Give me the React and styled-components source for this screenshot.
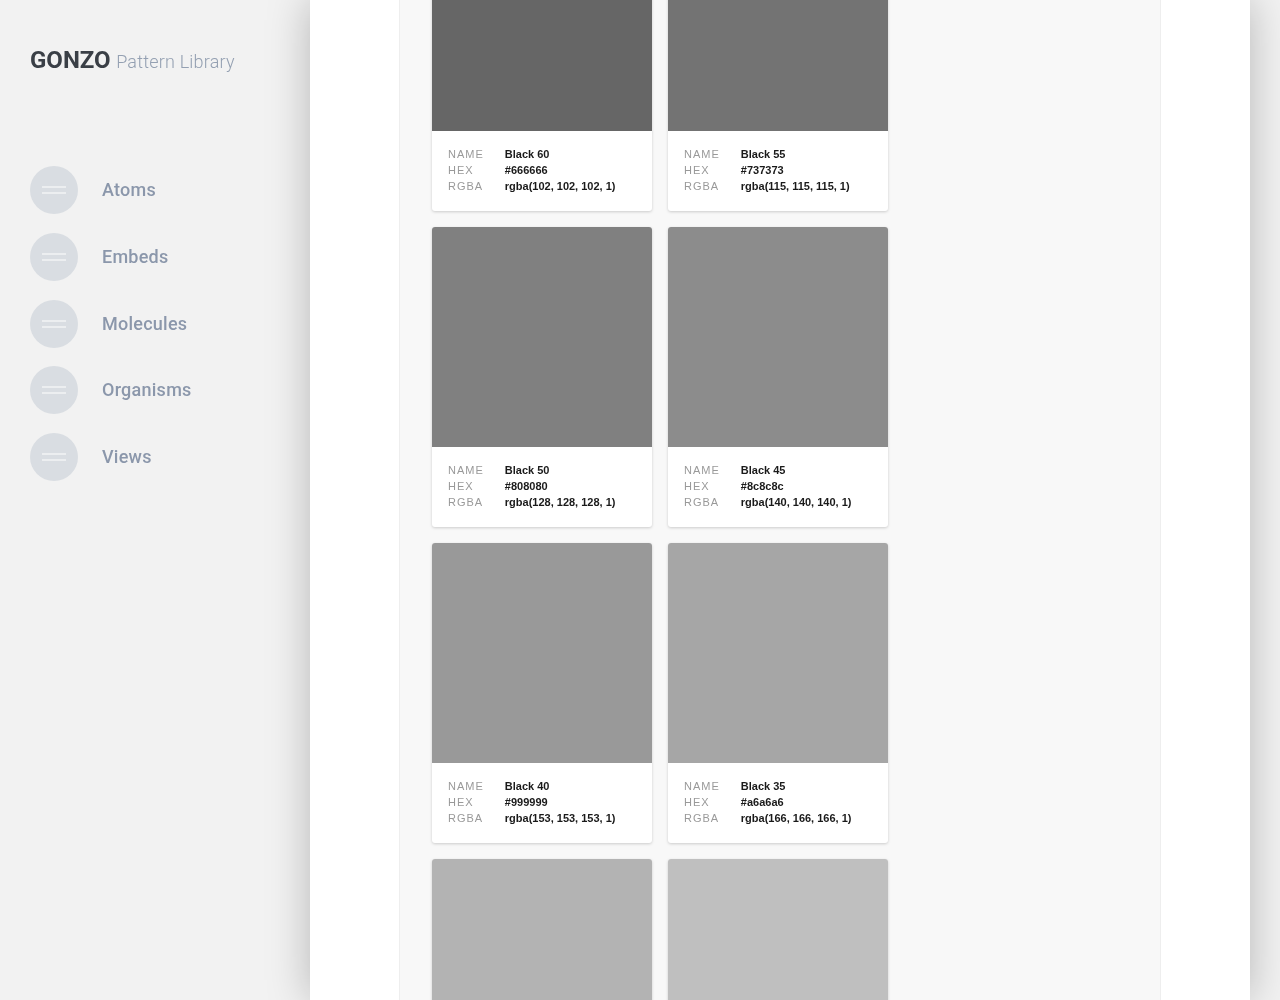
import React from 'react'
import styled, { createGlobalStyle } from 'styled-components'

const navItems = ['Atoms', 'Embeds', 'Molecules', 'Organisms', 'Views']

const swatches = [
  { name: 'Black 60', hex: '#666666', rgb: 102 },
  { name: 'Black 55', hex: '#737373', rgb: 115 },
  { name: 'Black 50', hex: '#808080', rgb: 128 },
  { name: 'Black 45', hex: '#8c8c8c', rgb: 140 },
  { name: 'Black 40', hex: '#999999', rgb: 153 },
  { name: 'Black 35', hex: '#a6a6a6', rgb: 166 },
  // last row runs past the fold, only the colour shows
  { hex: '#b3b3b3' },
  { hex: '#bfbfbf' },
]

function Swatch({ name, hex, rgb }) {
  return (
    <Card>
      <Color $color={hex} />
      {name && (
        <Info>
          <Label>Name</Label>
          <Value>{name}</Value>
          <Label>Hex</Label>
          <Value>{hex}</Value>
          <Label>Rgba</Label>
          <Value>{`rgba(${rgb}, ${rgb}, ${rgb}, 1)`}</Value>
        </Info>
      )}
    </Card>
  )
}

function App() {
  return (
    <Page>
      <GlobalStyle />
      <Sidebar>
        <Logo>
          <strong>GONZO</strong> <span>Pattern Library</span>
        </Logo>
        <Nav>
          {navItems.map((item) => (
            <NavItem href="#" key={item}>
              <NavIcon />
              <NavText>{item}</NavText>
            </NavItem>
          ))}
        </Nav>
      </Sidebar>
      <Main>
        <Panel>
          <Grid>
            {swatches.map((swatch) => (
              <Swatch key={swatch.hex} {...swatch} />
            ))}
          </Grid>
        </Panel>
      </Main>
    </Page>
  )
}

const GlobalStyle = createGlobalStyle`
  html, body {
    margin: 0;
    height: 100%;
    overflow: hidden;
    background: #f2f2f2;
  }
  *, *::before, *::after {
    box-sizing: border-box;
  }
`

const Page = styled.div`
  display: flex;
  height: 1000px;
  overflow: hidden;
  background: #f2f2f2;
  font-family: Roboto, sans-serif;
`

const Sidebar = styled.aside`
  flex: 0 0 310px;
  padding: 45px 30px 0;
  will-change: transform;
`

const Logo = styled.div`
  display: flex;
  align-items: baseline;
  gap: 5.5px;
  line-height: 30px;

  strong {
    font-size: 24px;
    font-weight: 700;
    color: #3a3f46;
  }

  span {
    font-size: 18px;
    font-weight: 300;
    letter-spacing: 0.2px;
    color: #94a0b2;
  }
`

const Nav = styled.nav`
  display: flex;
  flex-direction: column;
  gap: 18.8px;
  margin-top: 89px;
`

const NavItem = styled.a`
  display: flex;
  align-items: center;
  gap: 24px;
  font-size: 18px;
  font-weight: 500;
  letter-spacing: 0.25px;
  color: #8b97ab;
  text-decoration: none;
`

const NavText = styled.span`
  padding-bottom: 1px;
`

const NavIcon = styled.span`
  display: flex;
  align-items: center;
  justify-content: center;
  width: 48px;
  height: 48px;
  border-radius: 50%;
  background: #d9dde2;

  &::before {
    content: '';
    width: 24px;
    height: 8px;
    border-top: 2px solid #eceef0;
    border-bottom: 2px solid #eceef0;
  }
`

const Main = styled.main`
  flex: 0 0 940px;
  height: 1000px;
  padding: 0 89px;
  background: #fff;
  box-shadow: 0 0 40px rgba(0, 0, 0, 0.25);
  position: relative;
`

const Panel = styled.section`
  height: 100%;
  padding: 0 32px;
  overflow: hidden;
  background: #f8f8f8;
  border-left: 1px solid #eeeeee;
  border-right: 1px solid #eeeeee;
`

const Grid = styled.div`
  display: grid;
  grid-template-columns: repeat(2, 220px);
  gap: 16px;
  margin-top: -89px;
`

const Card = styled.article`
  height: 300px;
  border-radius: 3px;
  overflow: hidden;
  background: #fff;
  box-shadow: 0 1px 3px rgba(0, 0, 0, 0.18);
`

const Color = styled.div`
  height: 220px;
  background: ${(props) => props.$color};
`

const Info = styled.dl`
  display: grid;
  grid-template-columns: 56.8px 1fr;
  grid-auto-rows: 16px;
  align-items: center;
  margin: 0;
  padding: 15px 16px;
  font-family: 'Liberation Sans', Arial, sans-serif;
  font-size: 11px;
  line-height: 16px;
  will-change: transform;
`

const Label = styled.dt`
  font-weight: 400;
  letter-spacing: 1px;
  text-transform: uppercase;
  color: #999999;
`

const Value = styled.dd`
  margin: 0;
  font-weight: 700;
  color: #1a1a1a;
`

export default App
